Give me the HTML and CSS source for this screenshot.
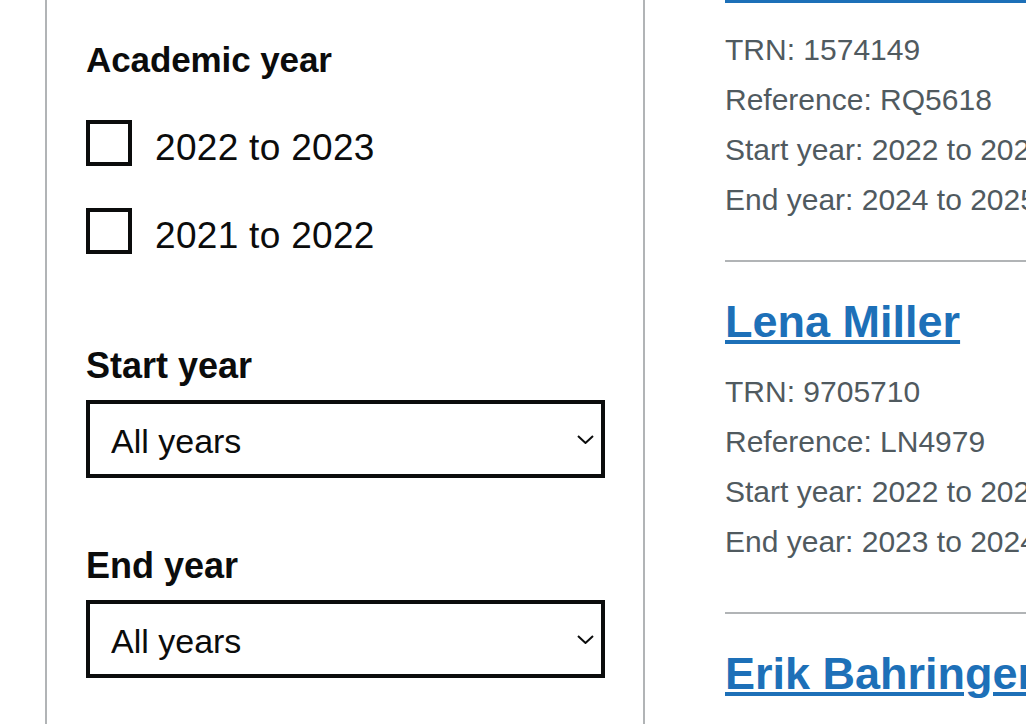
FILE: index.html
```html
<!DOCTYPE html>
<html lang="en">
<head>
<meta charset="utf-8">
<title>Trainees</title>
<link rel="stylesheet" href="styles.css">
</head>
<body>
<div class="layout">
  <aside class="filter">
    <form class="filter__form">
      <fieldset class="fieldset">
        <legend class="fieldset__legend">Academic year</legend>
        <div class="checkboxes">
          <div class="checkbox">
            <input class="checkbox__input" type="checkbox" id="ay-2022">
            <label class="checkbox__label" for="ay-2022">2022 to 2023</label>
          </div>
          <div class="checkbox">
            <input class="checkbox__input" type="checkbox" id="ay-2021">
            <label class="checkbox__label" for="ay-2021">2021 to 2022</label>
          </div>
        </div>
      </fieldset>

      <div class="form-group">
        <label class="label" for="start-year">Start year</label>
        <div class="select-wrap">
          <select class="select" id="start-year">
            <option>All years</option>
          </select>
          <svg class="select-wrap__chevron" width="17" height="9" viewBox="0 0 17 9" aria-hidden="true">
            <path d="M1 1 L8.5 8 L16 1" fill="none" stroke="#0b0c0c" stroke-width="2"/>
          </svg>
        </div>
      </div>

      <div class="form-group">
        <label class="label" for="end-year">End year</label>
        <div class="select-wrap">
          <select class="select" id="end-year">
            <option>All years</option>
          </select>
          <svg class="select-wrap__chevron" width="17" height="9" viewBox="0 0 17 9" aria-hidden="true">
            <path d="M1 1 L8.5 8 L16 1" fill="none" stroke="#0b0c0c" stroke-width="2"/>
          </svg>
        </div>
      </div>
    </form>
  </aside>

  <main class="results">
    <article class="result result--partial">
      <div class="result__underline"></div>
      <ul class="result__meta">
        <li>TRN: 1574149</li>
        <li>Reference: RQ5618</li>
        <li>Start year: 2022 to 2023</li>
        <li>End year: 2024 to 2025</li>
      </ul>
    </article>

    <article class="result">
      <h2 class="result__name"><a class="result__link" href="#">Lena Miller</a></h2>
      <ul class="result__meta">
        <li>TRN: 9705710</li>
        <li>Reference: LN4979</li>
        <li>Start year: 2022 to 2023</li>
        <li>End year: 2023 to 2024</li>
      </ul>
    </article>

    <article class="result">
      <h2 class="result__name"><a class="result__link" href="#">Erik Bahringer</a></h2>
    </article>
  </main>
</div>
</body>
</html>
```

FILE: styles.css
```css
* {
  box-sizing: border-box;
}

html, body {
  margin: 0;
  padding: 0;
  height: 100%;
  overflow: hidden;
  background: #ffffff;
}

body {
  font-family: "Liberation Sans", Arial, sans-serif;
  color: #0b0c0c;
}

.layout {
  display: flex;
  align-items: stretch;
  min-height: 100vh;
  padding-left: 45px;
}

/* ---------- Filter panel ---------- */

.filter {
  flex: 0 0 600px;
  width: 600px;
  border-left: 2px solid #b1b4b6;
  border-right: 2px solid #b1b4b6;
  padding: 40px 38px 0 39px;
}

.fieldset {
  border: 0;
  margin: 0;
  padding: 0;
  min-width: 0;
}

.fieldset__legend {
  display: block;
  padding: 0;
  font-weight: 700;
  font-size: 35px;
  line-height: 40px;
  letter-spacing: -0.1px;
}

.checkboxes {
  margin-top: 40px;
}

.checkbox {
  display: flex;
  align-items: flex-start;
  gap: 23px;
  margin-bottom: 42px;
}

.checkbox:last-child {
  margin-bottom: 0;
}

.checkbox__input {
  appearance: none;
  -webkit-appearance: none;
  flex: 0 0 46px;
  width: 46px;
  height: 46px;
  margin: 0;
  border: 4px solid #0b0c0c;
  background: #ffffff;
  border-radius: 0;
}

.checkbox__label {
  display: block;
  height: 46px;
  font-size: 37px;
  line-height: 46px;
  padding-top: 5px;
  letter-spacing: 0.3px;
}

.form-group {
  margin-top: 68px;
}

.fieldset + .form-group {
  margin-top: 92px;
}

.label {
  display: block;
  font-weight: 700;
  font-size: 36px;
  line-height: 40px;
  margin-bottom: 14px;
}

.select-wrap {
  position: relative;
  width: 100%;
}

.select {
  appearance: none;
  -webkit-appearance: none;
  display: block;
  width: 100%;
  height: 78px;
  margin: 0;
  padding: 4px 48px 0 21px;
  border: 4px solid #0b0c0c;
  border-radius: 0;
  background: #ffffff;
  color: #0b0c0c;
  font-family: "Liberation Sans", Arial, sans-serif;
  font-size: 34px;
}

.select-wrap__chevron {
  position: absolute;
  right: 11px;
  top: 35px;
  pointer-events: none;
}

/* ---------- Results ---------- */

.results {
  flex: 0 0 620px;
  padding-left: 80px;
}

.result {
  border-bottom: 2px solid #b1b4b6;
  padding-top: 33px;
}

.result:last-child {
  border-bottom: 0;
}

.result--partial {
  padding-top: 0;
}

.result__underline {
  height: 3px;
  width: 100%;
  background: #1d70b8;
  margin-bottom: 22px;
}

.result__name {
  margin: 0 0 18px;
  font-weight: 700;
  font-size: 45px;
  line-height: 54px;
  white-space: nowrap;
}

.result__link {
  color: #1d70b8;
  text-decoration: underline;
  text-decoration-thickness: 4px;
  text-underline-offset: 3px;
}

.result__meta {
  list-style: none;
  margin: 0 0 45px;
  padding: 0;
  font-size: 30px;
  line-height: 50px;
  color: #505a5f;
  white-space: nowrap;
}

.result--partial .result__meta {
  margin-bottom: 35px;
}
```
